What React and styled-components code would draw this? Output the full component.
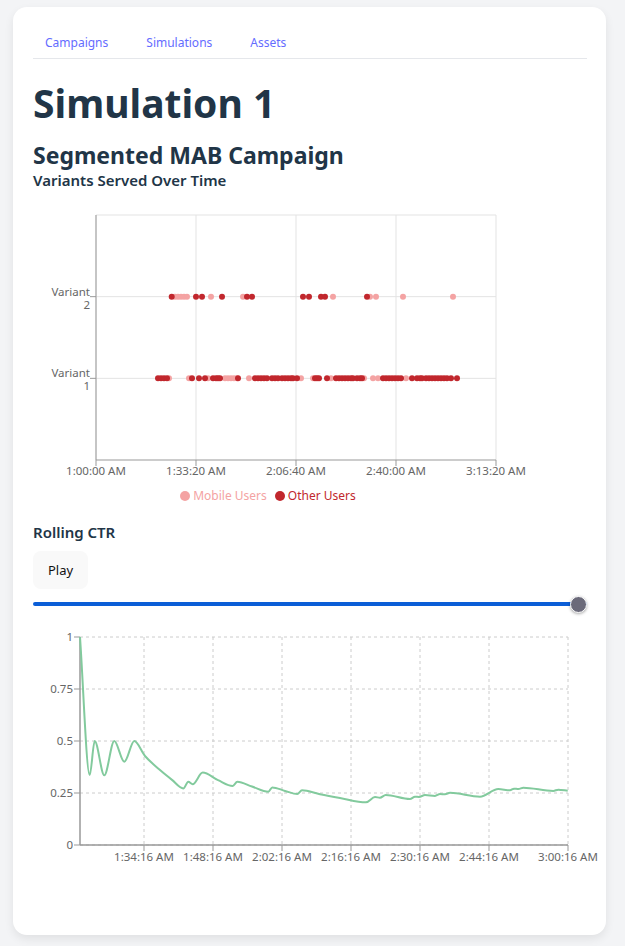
import React from 'react';
import styled, { createGlobalStyle } from 'styled-components';

const GlobalStyle = createGlobalStyle`
  body {
    margin: 0;
    background: #f3f4f6;
    font-family: "Noto Sans", "Open Sans", sans-serif;
    color: #213547;
  }
`;

const Page = styled.div`
  padding: 7px 19px 11px 13px;
`;

const Card = styled.div`
  background: #ffffff;
  border-radius: 14px;
  box-shadow: 0 4px 10px rgba(0, 0, 0, 0.08);
  padding: 20px 19px 0 20px;
  height: 928px;
  box-sizing: border-box;
`;

const Nav = styled.nav`
  display: flex;
  gap: 14px;
  border-bottom: 1px solid #e5e7eb;
`;

const NavLink = styled.a`
  padding: 8px 12px;
  font-size: 12px;
  line-height: 15px;
  color: #646cff;
  text-decoration: none;
`;

const Title = styled.h1`
  font-size: 39px;
  font-weight: 700;
  line-height: 48px;
  margin: 20px 0 0;
`;

const Subtitle = styled.h2`
  font-size: 23px;
  font-weight: 700;
  line-height: 30px;
  margin: 13px 0 0;
`;

const Caption = styled.h3`
  font-size: 15px;
  font-weight: 600;
  line-height: 20px;
  margin: ${p => p.gap || 0}px 0 0;
`;

const ChartBox = styled.div`
  width: ${p => p.w}px;
  margin-top: ${p => p.top}px;
  svg {
    display: block;
    overflow: visible;
    font-family: "Noto Sans", sans-serif;
  }
`;

const Legend = styled.div`
  display: flex;
  justify-content: center;
  gap: 8px;
  font-size: 12px;
  margin-top: 12px;
`;

const LegendItem = styled.span`
  display: flex;
  align-items: center;
  gap: 3px;
  color: ${p => p.color};
  &::before {
    content: '';
    width: 10px;
    height: 10px;
    border-radius: 50%;
    background: ${p => p.color};
  }
`;

const PlayButton = styled.button`
  margin-top: 9px;
  padding: 10px 14px;
  font-family: inherit;
  font-size: 13px;
  line-height: 16px;
  color: #111;
  background: #f9f9f9;
  border: 1px solid transparent;
  border-radius: 8px;
`;

const Range = styled.input`
  display: block;
  width: 100%;
  margin: 7px 0 0;
  height: 16px;
  -webkit-appearance: none;
  appearance: none;
  background: transparent;

  &::-webkit-slider-runnable-track {
    height: 4px;
    border-radius: 2px;
    background: #0b5ed7;
  }
  &::-webkit-slider-thumb {
    -webkit-appearance: none;
    width: 17px;
    height: 17px;
    margin-top: -6.5px;
    border-radius: 50%;
    background: #6b6a7a;
    border: 1.5px solid #fff;
    box-shadow: 0 1px 3px rgba(0, 0, 0, 0.35);
    box-sizing: border-box;
  }
`;

const DARK = '#c1272d';
const PINK = '#f4a3a3';

// scatter points: page-x positions, per variant and segment
const v2Other = [171.7, 196, 202, 222, 247, 252, 303, 309, 321, 325, 367];
const v2Mobile = [175, 178, 181, 184, 187, 211, 243, 333, 370, 376, 403, 453];
const v1Other = [158, 161, 164, 167, 192, 199, 205, 213, 216, 218, 220, 238,
  255, 258, 261, 264, 267, 272, 275, 278, 282, 285, 288, 291, 293, 297,
  315, 317, 319, 327, 336, 339, 342, 345, 348, 351, 353, 357, 360, 362,
  383, 386, 389, 392, 395, 398, 401, 412, 417, 420, 422,
  426, 429, 432, 435, 438, 441, 444, 447, 451, 457];
const v1Mobile = [169, 189, 208, 225, 228, 231, 234, 237, 249, 301, 313, 331, 364, 373, 378, 406];

const VariantsChart = () => {
  const L = 63, R = 463, T = 15, B = 260;
  const yOf = v => B - (v / 3) * (B - T);
  const xs = [L, L + 100, L + 200, L + 300, R];
  const xLabels = ['1:00:00 AM', '1:33:20 AM', '2:06:40 AM', '2:40:00 AM', '3:13:20 AM'];
  const dots = (list, v, color) =>
    list.map((x, i) => <circle key={color + v + i} cx={x - 33} cy={yOf(v)} r={3} fill={color} />);

  return (
    <svg width={470} height={275}>
      {xs.map(x => <line key={x} x1={x} x2={x} y1={T} y2={B} stroke="#e3e3e3" />)}
      {[1, 2, 3].map(v => <line key={v} x1={L} x2={R} y1={yOf(v)} y2={yOf(v)} stroke="#e3e3e3" />)}
      <line x1={L} x2={L} y1={T} y2={B} stroke="#999" />
      <line x1={L} x2={R} y1={B} y2={B} stroke="#999" />
      {xs.map((x, i) => (
        <g key={'t' + x}>
          <line x1={x} x2={x} y1={B} y2={B + 6} stroke="#999" />
          <text x={x} y={B + 15} fontSize="11.5" fill="#666" textAnchor="middle">{xLabels[i]}</text>
        </g>
      ))}
      {[1, 2].map(v => (
        <g key={'y' + v}>
          <line x1={L - 6} x2={L} y1={yOf(v)} y2={yOf(v)} stroke="#999" />
          <text fontSize="11.5" fill="#666" textAnchor="end">
            <tspan x={L - 6} y={yOf(v) - 1}>Variant</tspan>
            <tspan x={L - 6} y={yOf(v) + 12}>{v}</tspan>
          </text>
        </g>
      ))}
      {dots(v2Mobile, 2, PINK)}
      {dots(v1Mobile, 1, PINK)}
      {dots(v2Other, 2, DARK)}
      {dots(v1Other, 1, DARK)}
    </svg>
  );
};

// rolling CTR: [page x, ctr]
const ctr = [
  [80, 1], [89.7, 0.336], [94.7, 0.5], [104.3, 0.335], [114.3, 0.5], [124.3, 0.4], [134.3, 0.5],
  [145, 0.428], [160, 0.36], [172, 0.313], [183.3, 0.272], [188.3, 0.304], [192.7, 0.292],
  [202.7, 0.348], [218, 0.312], [232.7, 0.284], [237.3, 0.304], [252, 0.281], [268.3, 0.256],
  [272.3, 0.277], [285, 0.26], [297.3, 0.245], [302, 0.263], [320, 0.244], [340, 0.226],
  [366, 0.205], [375, 0.231], [380, 0.227], [385.7, 0.24], [410, 0.221], [415, 0.232],
  [419, 0.231], [425, 0.24], [435, 0.236], [440, 0.245], [445, 0.244], [450, 0.251],
  [480, 0.232], [498.3, 0.269], [510, 0.263], [514, 0.271], [518.3, 0.269], [523.3, 0.275],
  [553.3, 0.26], [558.3, 0.266], [567.7, 0.261],
];

const monotonePath = pts => {
  const n = pts.length;
  const d = [];
  for (let i = 0; i < n - 1; i++) {
    d.push((pts[i + 1][1] - pts[i][1]) / (pts[i + 1][0] - pts[i][0]));
  }
  const m = pts.map((p, i) => {
    if (i === 0) return d[0];
    if (i === n - 1) return d[n - 2];
    if (d[i - 1] * d[i] <= 0) return 0;
    const h0 = p[0] - pts[i - 1][0], h1 = pts[i + 1][0] - p[0];
    return (3 * (h0 + h1)) / ((2 * h1 + h0) / d[i - 1] + (h1 + 2 * h0) / d[i]);
  });
  let s = `M${pts[0][0]},${pts[0][1]}`;
  for (let i = 0; i < n - 1; i++) {
    const h = (pts[i + 1][0] - pts[i][0]) / 3;
    s += `C${pts[i][0] + h},${pts[i][1] + m[i] * h} ${pts[i + 1][0] - h},${pts[i + 1][1] - m[i + 1] * h} ${pts[i + 1][0]},${pts[i + 1][1]}`;
  }
  return s;
};

const CtrChart = () => {
  const L = 47, R = 535, T = 12, B = 220;
  const yOf = v => B - v * (B - T);
  const ticks = [['1:34:16 AM', 144], ['1:48:16 AM', 213], ['2:02:16 AM', 282], ['2:16:16 AM', 351],
    ['2:30:16 AM', 420], ['2:44:16 AM', 489], ['3:00:16 AM', 568]];
  const yTicks = [0, 0.25, 0.5, 0.75, 1];
  const pts = ctr.map(([x, v]) => [x - 33, yOf(v)]);

  return (
    <svg width={570} height={245}>
      {yTicks.map(v => (
        <line key={v} x1={L} x2={R} y1={yOf(v)} y2={yOf(v)} stroke="#ccc" strokeDasharray="3 3" />
      ))}
      {ticks.map(([, x]) => (
        <line key={x} x1={x - 33} x2={x - 33} y1={T} y2={B} stroke="#ccc" strokeDasharray="3 3" />
      ))}
      <line x1={L} x2={L} y1={T} y2={B} stroke="#999" strokeWidth="1.5" />
      <line x1={L} x2={R} y1={B} y2={B} stroke="#999" strokeWidth="1.5" />
      {yTicks.map(v => (
        <g key={'y' + v}>
          <line x1={L - 6} x2={L} y1={yOf(v)} y2={yOf(v)} stroke="#999" />
          <text x={L - 7} y={yOf(v) + 4} fontSize="11.5" fill="#666" textAnchor="end">{v}</text>
        </g>
      ))}
      {ticks.map(([label, x]) => (
        <g key={label}>
          <line x1={x - 33} x2={x - 33} y1={B} y2={B + 6} stroke="#999" />
          <text x={x - 33} y={B + 16} fontSize="11.5" fill="#666" textAnchor="middle">{label}</text>
        </g>
      ))}
      <path d={monotonePath(pts)} fill="none" stroke="#82ca9d" strokeWidth="2" />
    </svg>
  );
};

const App = () => (
  <Page>
    <GlobalStyle />
    <Card>
      <Nav>
        <NavLink href="#">Campaigns</NavLink>
        <NavLink href="#">Simulations</NavLink>
        <NavLink href="#">Assets</NavLink>
      </Nav>
      <Title>Simulation 1</Title>
      <Subtitle>Segmented MAB Campaign</Subtitle>
      <Caption>Variants Served Over Time</Caption>
      <ChartBox w={470} top={10}>
        <VariantsChart />
        <Legend>
          <LegendItem color={PINK}>Mobile Users</LegendItem>
          <LegendItem color={DARK}>Other Users</LegendItem>
        </Legend>
      </ChartBox>
      <Caption gap={18}>Rolling CTR</Caption>
      <PlayButton>Play</PlayButton>
      <Range type="range" min="0" max="100" defaultValue="100" />
      <ChartBox w={570} top={13}>
        <CtrChart />
      </ChartBox>
    </Card>
  </Page>
);

export default App;
